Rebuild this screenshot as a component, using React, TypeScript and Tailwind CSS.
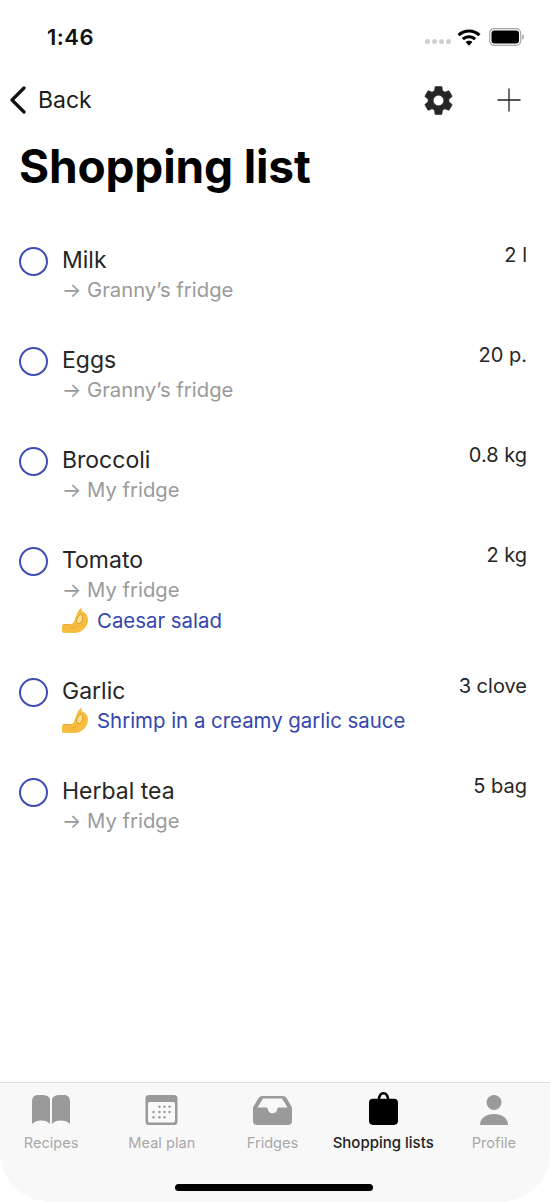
import React from "react";

const Hand = () => (
  <svg viewBox="0 0 27 26" className="w-[27px] h-[26px] shrink-0">
    <path d="M0 18.500C0 17 1 16.200 2.500 16.200H8c2 0 3.200-.8 4-2.700l3-8c.8-2 1.800-4 3.500-5 .8-.5 1.500 0 1.500 1l-.3 1.700c3.500 1 6.300 4 6.300 8.300 0 6.500-5 12.300-11.500 13.200-3.800.5-7.500.4-11.500.1C1 25.400 0 24.500 0 23z" fill="#f8bd3e" />
    <path d="M18.500 6.500c-1.800.6-3.600 3.500-4 5.800-.4 2.200 1 3.700 2.800 3.200 2.200-.6 3.700-3.400 3.300-6-.2-1.800-1-3.300-2.100-3z" fill="#fde08a" stroke="#c98a20" strokeWidth="0.800" />
    <path d="M1 16.800c3-.6 6-.4 8 .6" stroke="#dc9a2c" strokeWidth="0.800" fill="none" />
    <path d="M14.500 18c-1.500 1.500-3.500 2.300-5.500 2.300" stroke="#dc9a2c" strokeWidth="0.800" fill="none" />
  </svg>
);

const Item = ({ name, qty, fridge, recipe }: { name: string; qty: string; fridge?: string; recipe?: string }) => (
  <div className="flex items-start pl-[19px] pr-[23px]">
    <div className="mt-[4px] w-[29px] h-[29px] rounded-full border-[2.200px] border-[#3f4db5] shrink-0" />
    <div className="ml-[14px] flex-1 flex flex-col">
      <div className="text-[23px] leading-[34px] text-[#262626]">{name}</div>
      {fridge && <div className="text-[20.300px] leading-[26px] h-[31px] text-[#9a9a9a]"><span className="inline-block w-[25px]">→</span>{fridge}</div>}
      {recipe && (
        <div className="flex items-center h-[26px] mb-[5px] text-[20.400px] text-[#3446ae] whitespace-nowrap">
          <Hand />
          <span className="ml-[8px]">{recipe}</span>
        </div>
      )}
    </div>
    <div className="text-[20px] leading-[24px] text-[#262626]">{qty}</div>
  </div>
);

const Tab = ({ label, active, children }: { label: string; active?: boolean; children: React.ReactNode }) => (
  <div className="w-[110.700px] shrink-0 flex flex-col items-center">
    <div className="h-[37px] w-[40px] flex items-end justify-center">{children}</div>
    <div className={`mt-[9px] leading-[18px] whitespace-nowrap ${active ? "text-[15px] text-[#222222] font-medium" : "text-[14.600px] text-[#a8a8a8]"}`}>{label}</div>
  </div>
);

export default function App() {
  return (
    <div className="relative w-[550px] h-[1202px] overflow-hidden bg-white flex flex-col" style={{ fontFamily: "Inter, 'Liberation Sans', sans-serif" }}>
      <div className="h-[74px] flex items-center justify-between pl-[47px] pr-[25px] shrink-0">
        <div className="text-[22px] font-semibold text-[#111111] tracking-[0.5px]">1:46</div>
        <div className="flex items-center">
          <div className="flex gap-[2px] mt-[8px] mr-[6px]">
            {[0, 1, 2, 3].map(i => <div key={i} className="w-[5px] h-[5px] rounded-full bg-[#cfcfcf]" />)}
          </div>
          <svg viewBox="0 0 24 18" className="w-[24px] h-[18px]">
            <path d="M12 1.500C7.500 1.500 3.500 3.200.5 6L2.700 8.300C5.200 6 8.400 4.500 12 4.500s6.800 1.500 9.300 3.800L23.500 6C20.500 3.200 16.500 1.500 12 1.500z" fill="#000" />
            <path d="M12 7.200c-2.800 0-5.300 1.100-7.200 2.800l2.100 2.200c1.400-1.200 3.100-2 5.100-2s3.700.8 5.100 2l2.100-2.200C17.300 8.300 14.800 7.200 12 7.200z" fill="#000" />
            <path d="M12 12.800c-1.300 0-2.500.5-3.400 1.300l3.400 3.600 3.400-3.600c-.9-.8-2.100-1.300-3.400-1.300z" fill="#000" />
          </svg>
          <svg viewBox="0 0 36 18" className="w-[36px] h-[18px] ml-[8px]">
            <rect x="0.700" y="0.700" width="31" height="16.600" rx="4.500" fill="none" stroke="#a8a8a8" strokeWidth="1.200" />
            <rect x="2.500" y="2.500" width="27.500" height="13" rx="3" fill="#000" />
            <rect x="33" y="6.500" width="1.800" height="5" rx="0.900" fill="#b0b0b0" />
          </svg>
        </div>
      </div>

      <div className="h-[52px] flex items-center shrink-0 pl-[9px] pr-[29px]">
        <svg viewBox="0 0 18 28" className="w-[18px] h-[28px]">
          <path d="M15 2 L3 14 L15 26" fill="none" stroke="#111" strokeWidth="3.200" strokeLinecap="round" strokeLinejoin="round" />
        </svg>
        <div className="ml-[11px] text-[23px] text-[#1c1c1c] flex-1 pt-[1px]">Back</div>
        <svg viewBox="0 0 24 24" className="w-[35px] h-[35px] mr-[41px]">
          <path fill="#262626" stroke="#262626" strokeWidth="0.400" d="M19.140 12.940c.04-.3.060-.61.060-.94 0-.32-.02-.64-.07-.94l2.030-1.580a.49.49 0 0 0 .12-.61l-1.920-3.320a.488.488 0 0 0-.59-.22l-2.390.96c-.5-.38-1.030-.7-1.620-.94l-.36-2.540a.484.484 0 0 0-.48-.41h-3.840c-.24 0-.43.17-.47.41l-.36 2.540c-.59.24-1.130.57-1.620.94l-2.390-.96c-.22-.08-.47 0-.59.22L2.740 8.870c-.12.21-.08.47.12.61l2.030 1.580c-.05.3-.09.63-.09.94s.02.64.07.94l-2.030 1.580a.49.49 0 0 0-.12.61l1.920 3.320c.12.22.37.29.59.22l2.390-.96c.5.38 1.030.7 1.620.94l.36 2.540c.05.24.24.41.48.41h3.840c.24 0 .44-.17.47-.41l.36-2.540c.59-.24 1.130-.56 1.620-.94l2.390.96c.22.08.47 0 .59-.22l1.920-3.320c.12-.22.07-.47-.12-.61l-2.010-1.580zM12 15.600A3.610 3.610 0 0 1 8.400 12c0-1.980 1.620-3.600 3.600-3.600s3.600 1.620 3.600 3.600-1.620 3.600-3.600 3.600z" />
        </svg>
        <svg viewBox="0 0 24 24" className="w-[24px] h-[24px]">
          <path d="M12 0.500V23.500M0.500 12H23.500" stroke="#222" strokeWidth="1.300" fill="none" />
        </svg>
      </div>

      <h1 className="pl-[19px] text-[46px] leading-[56px] font-bold text-black mt-[12px] shrink-0 tracking-[-0.15px]">Shopping list</h1>

      <div className="flex-1 flex flex-col mt-[49px] gap-[35px]">
        <Item name="Milk" qty="2 l" fridge="Granny’s fridge" />
        <Item name="Eggs" qty="20 p." fridge="Granny’s fridge" />
        <Item name="Broccoli" qty="0.8 kg" fridge="My fridge" />
        <Item name="Tomato" qty="2 kg" fridge="My fridge" recipe="Caesar salad" />
        <Item name="Garlic" qty="3 clove" recipe="Shrimp in a creamy garlic sauce" />
        <Item name="Herbal tea" qty="5 bag" fridge="My fridge" />
      </div>

      <div className="relative h-[120px] shrink-0 bg-[#f8f8f8] border-t border-[#e2e2e2] rounded-b-[50px] flex pt-[5px] pl-0 justify-center">
        <div className="flex -ml-[5px] shrink-0">
          <Tab label="Recipes">
            <svg viewBox="0 0 38 30" className="w-[38px] h-[30px]">
              <path fill="#9a9a9a" d="M0 7C0 2.500 2 0 6 0h4c4.500 0 7 1.500 8 4v25c-2-2.500-5-3.500-9-3.500-3.500 0-6.500 1-9 3.500zM38 7c0-4.500-2-7-6-7h-4c-4.500 0-7 1.500-8 4v25c2-2.500 5-3.500 9-3.500 3.500 0 6.500 1 9 3.500z" />
            </svg>
          </Tab>
          <Tab label="Meal plan">
            <svg viewBox="0 0 32 30" className="w-[33px] h-[30px]">
              <rect width="32" height="30" rx="3.500" fill="#9a9a9a" />
              <rect x="2.500" y="7" width="27" height="20.500" rx="1.500" fill="#f8f8f8" />
              {[[14,11.700],[19,11.700],[24,11.700],[8,17],[14,17],[19,17],[24,17],[8,22.300],[14,22.300],[19,22.300]].map(([x, y]) => (
                <circle key={x + "-" + y} cx={x} cy={y} r="1.200" fill="#9a9a9a" />
              ))}
            </svg>
          </Tab>
          <Tab label="Fridges">
            <svg viewBox="0 0 39 29" className="w-[39px] h-[29px]">
              <path fill="#9a9a9a" fillRule="evenodd" d="M9.500 0h20c2 0 3 .7 4 2l5.500 9.500V25c0 2.500-1.500 4-4 4H4c-2.500 0-4-1.500-4-4V11.500L5.500 2c1-1.300 2-2 4-2zM10 2.500 4.500 11.500H13c1.200 0 1.800.6 1.800 1.600 0 2.400 2 4.200 4.700 4.200s4.700-1.800 4.700-4.200c0-1 .6-1.600 1.800-1.600h8.500L29 2.500z" />
            </svg>
          </Tab>
          <Tab label="Shopping lists" active>
            <svg viewBox="0 0 30 34" className="w-[29px] h-[33px]">
              <path fill="#000" fillRule="evenodd" d="M4 7h5C9.500 3 11.500 0 15 0s5.500 3 6 7h5c2.500 0 4 1.500 4 4v19c0 2.500-1.500 4-4 4H4c-2.500 0-4-1.500-4-4V11c0-2.500 1.500-4 4-4zM11.500 7h7C18 4.500 17 2.500 15 2.500S12 4.500 11.500 7z" />
            </svg>
          </Tab>
          <Tab label="Profile">
            <svg viewBox="0 0 28 30" className="w-[28px] h-[30px]">
              <circle cx="14" cy="7.500" r="7.500" fill="#9a9a9a" />
              <path fill="#9a9a9a" d="M0 30c0-7 6-11 14-11s14 4 14 11z" />
            </svg>
          </Tab>
        </div>
        <div className="absolute left-[175px] bottom-[11px] w-[198px] h-[7px] rounded-full bg-black" />
      </div>
    </div>
  );
}
